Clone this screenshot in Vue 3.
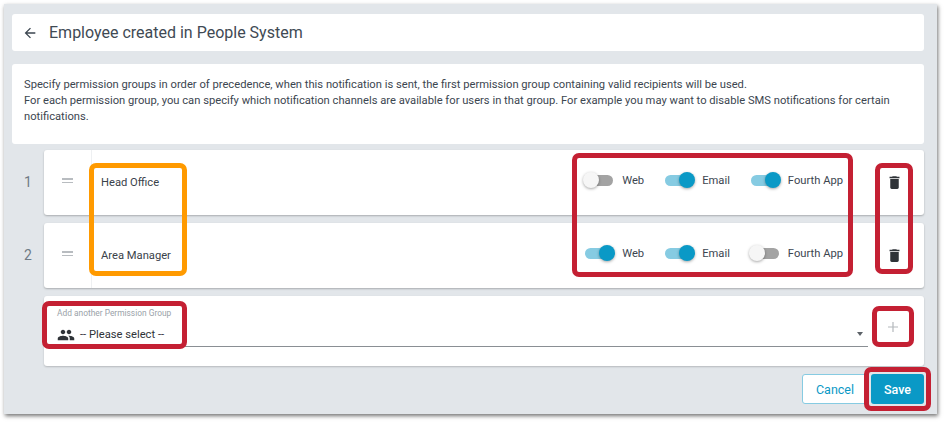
<script setup>
const rows = [
  { n: 1, name: 'Head Office', ch: [['Web', false], ['Email', true], ['Fourth App', true]] },
  { n: 2, name: 'Area Manager', ch: [['Web', true], ['Email', true], ['Fourth App', false]] }
]
</script>

<template>
  <div class="page">
    <div class="frame">
      <header class="card head">
        <svg class="back" width="16" height="16" viewBox="0 0 24 24"><path d="M20 11H7.830l5.590-5.590L12 4l-8 8 8 8 1.410-1.410L7.830 13H20v-2z" fill="#3c4650"/></svg>
        <h1>Employee created in People System</h1>
      </header>
      <section class="card info">
        <p>Specify permission groups in order of precedence, when this notification is sent, the first permission group containing valid recipients will be used.</p>
        <p>For each permission group, you can specify which notification channels are available for users in that group. For example you may want to disable SMS notifications for certain notifications.</p>
      </section>
      <div v-for="r in rows" :key="r.n" class="row">
        <div class="num">{{ r.n }}</div>
        <div class="card line">
          <div class="drag"><i></i><i></i></div>
          <div class="name">{{ r.name }}</div>
          <div class="channels">
            <div v-for="c in r.ch" :key="c[0]" class="chan">
              <span class="toggle" :class="{ on: c[1] }"><b></b></span>
              <span class="lab">{{ c[0] }}</span>
            </div>
          </div>
          <div class="del">
            <svg width="17" height="17" viewBox="0 0 24 24"><path d="M6 19c0 1.100.9 2 2 2h8c1.100 0 2-.9 2-2V7H6v12zM19 4h-3.500l-1-1h-5l-1 1H5v2h14V4z" fill="#2f3338"/></svg>
          </div>
        </div>
      </div>
      <section class="card add">
        <div class="field">
          <div class="flabel">Add another Permission Group</div>
          <div class="fvalue">
            <svg width="18" height="18" viewBox="0 0 24 24"><path d="M16 11c1.660 0 2.990-1.340 2.990-3S17.660 5 16 5s-3 1.340-3 3 1.340 3 3 3zm-8 0c1.660 0 2.990-1.340 2.990-3S9.660 5 8 5 5 6.340 5 8s1.340 3 3 3zm0 2c-2.330 0-7 1.170-7 3.500V19h14v-2.500c0-2.330-4.670-3.500-7-3.500zm8 0c-.29 0-.62.02-.97.050 1.160.84 1.970 1.970 1.970 3.450V19h6v-2.500c0-2.330-4.670-3.500-7-3.500z" fill="#2f3338"/></svg>
            <span>-- Please select --</span>
            <em class="caret"></em>
          </div>
        </div>
        <div class="plus">
          <svg width="12" height="12" viewBox="0 0 12 12"><path d="M6 1v10M1 6h10" stroke="#b4b8bc" stroke-width="1.200" fill="none"/></svg>
        </div>
      </section>
      <footer class="foot">
        <button class="btn cancel">Cancel</button>
        <button class="btn save">Save</button>
      </footer>

      <div class="mark orange a1"></div>
      <div class="mark a2"></div>
      <div class="mark a3"></div>
      <div class="mark a4"></div>
      <div class="mark a5"></div>
      <div class="mark a6"></div>
    </div>
  </div>
</template>

<style>
html, body { margin: 0; background: #fff; }
</style>

<style scoped>
.page { height: 423px; box-sizing: border-box; padding: 4px 9px 9px 4px; overflow: hidden; }
.frame {
  position: relative;
  box-sizing: border-box;
  width: 933px;
  height: 410px;
  padding: 10px 13px 0 8px;
  background: #e2e6ea;
  box-shadow: 1px 2px 4px rgba(0, 0, 0, .55);
  font-family: Roboto, sans-serif;
  color: #3c4650;
}
.card { background: #fff; border-radius: 3px; }
.head {
  height: 37px;
  display: flex;
  align-items: center;
  gap: 11px;
  padding-left: 10px;
  margin-bottom: 13px;
}
.back { flex: none; }
h1 { margin: 0; font-size: 16px; font-weight: 400; color: #3f4a54; }
.info {
  height: 80px;
  box-sizing: border-box;
  padding: 13px 12px 0;
  margin-bottom: 6px;
  font-size: 11.2px;
  line-height: 16px;
}
.info p { margin: 0; }
.row { display: flex; margin-bottom: 8px; }
.num { width: 32px; font-size: 14px; color: #6f7b85; padding-top: 24px; text-indent: 12px; }
.line {
  flex: 1;
  height: 65px;
  display: flex;
  align-items: flex-start;
  box-shadow: 0 1px 2px rgba(0, 0, 0, .25);
}
.drag { width: 47px; padding-top: 28px; box-sizing: border-box; display: flex; flex-direction: column; align-items: center; gap: 2px; }
.drag i { width: 11px; height: 1.5px; background: #b8bcc0; }
.name { flex: 1; height: 100%; box-sizing: border-box; padding: 26px 0 0 9px; font-size: 11.2px; border-left: 1px solid #eef0f2; color: #3a424a; }
.channels { display: flex; padding-top: 22px; }
.chan { display: flex; align-items: center; height: 16px; margin-left: 21px; }
.toggle { position: relative; display: block; width: 28px; height: 11px; border-radius: 6px; background: #a3a3a3; margin-right: 9px; }
.toggle b { position: absolute; top: -2.500px; left: -2px; width: 16px; height: 16px; border-radius: 50%; background: #f6f6f6; box-shadow: 0 1px 3px rgba(0, 0, 0, .35); }
.toggle.on { background: #86cbe2; }
.toggle.on b { left: auto; right: -2px; background: #0a99c6; }
.lab { font-size: 11.2px; }
.del { width: 81px; padding: 24px 0 0 21px; box-sizing: border-box; height: 100%; }
.del svg { display: block; margin: 0 auto; }
.add {
  margin-left: 32px;
  height: 70px;
  display: flex;
  box-shadow: 0 1px 2px rgba(0, 0, 0, .2);
}
.field { flex: 1; padding: 12px 0 0 13px; }
.flabel { font-size: 8.4px; color: #9aa2a9; height: 16px; line-height: 10px; }
.fvalue {
  position: relative;
  display: flex;
  align-items: center;
  gap: 5px;
  height: 21px;
  margin-left: -13px;
  padding: 0 0 1px 13px;
  border-bottom: 1px solid #8a8f94;
  font-size: 11.2px;
  color: #2f3338;
}
.caret { position: absolute; right: 5px; top: 7.500px; border: 3.500px solid transparent; border-top: 4px solid #5c6268; border-bottom: 0; }
.plus { width: 56px; padding: 25px 0 0 19px; box-sizing: border-box; }
.plus svg { display: block; }
.foot { display: flex; justify-content: flex-end; gap: 3px; margin-top: 8px; }
.btn { height: 30px; border-radius: 3px; font: 500 12.500px Roboto, sans-serif; padding: 0; }
.cancel { width: 66px; background: #fff; border: 1px solid #86cbe2; color: #0a99c6; font-weight: 400; }
.save { width: 53px; background: #0a99c6; border: 0; color: #fff; }
.mark { position: absolute; box-sizing: border-box; border: 5px solid #c42033; border-radius: 7px; pointer-events: none; }
.orange { border-color: #ff9a00; }
.a1 { left: 85px; top: 159px; width: 98px; height: 113px; }
.a2 { left: 568px; top: 149px; width: 281px; height: 124px; }
.a3 { left: 871px; top: 159px; width: 38px; height: 111px; }
.a4 { left: 38px; top: 297px; width: 145px; height: 48px; }
.a5 { left: 868px; top: 302px; width: 42px; height: 41px; }
.a6 { left: 860px; top: 363px; width: 67px; height: 44px; }
</style>
